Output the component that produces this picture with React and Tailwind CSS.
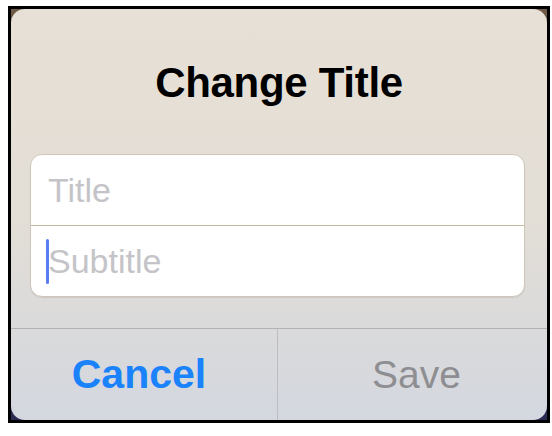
export default function App() {
  return (
    <div className="w-[552px] h-[436px] bg-white pt-[6px] pl-[8px]" style={{ fontFamily: '"Liberation Sans", Arial, sans-serif' }}>
      <div className="w-[542px] h-[417px] border-[3px] border-black bg-gradient-to-b from-[#6e5a44] to-[#2a2a55]">
        <div className="w-full h-full rounded-[14px] overflow-hidden bg-gradient-to-b from-[#e7e0d6] via-[#e3ded6] to-[#d3d7df] flex flex-col">
          <div className="h-[48px] mt-[50px] flex items-center justify-center text-[42px] font-bold text-black leading-none tracking-[-0.3px]">
            Change Title
          </div>
          <div className="mt-[47px] ml-[19px] w-[495px] h-[143px] rounded-[12px] border border-[#cfc6b8] bg-white flex flex-col shadow-[0_1px_1px_rgba(0,0,0,0.08)]">
            <div className="h-[71px] border-b border-[#c6b79f] flex items-center pl-[17px] text-[34px] text-[#c4c4c8] leading-none">
              Title
            </div>
            <div className="flex-1 flex items-center pl-[17px] text-[34px] text-[#c4c4c8] leading-none relative">
              <span className="absolute left-[15px] top-[13px] w-[3px] h-[45px] rounded-full bg-[#5b7df2]"></span>
              Subtitle
            </div>
          </div>
          <div className="mt-[31px] border-t border-[#b3b3b5] flex-1 flex">
            <div className="w-[267px] border-r border-[#bdbdc0] flex items-center justify-center text-[41px] font-bold text-[#1a82fb] leading-none">
              <span className="mr-[10px]">Cancel</span>
            </div>
            <div className="flex-1 flex items-center justify-center text-[39px] text-[#8e8e92] leading-none">
              <span className="ml-[8px]">Save</span>
            </div>
          </div>
        </div>
      </div>
    </div>
  );
}
